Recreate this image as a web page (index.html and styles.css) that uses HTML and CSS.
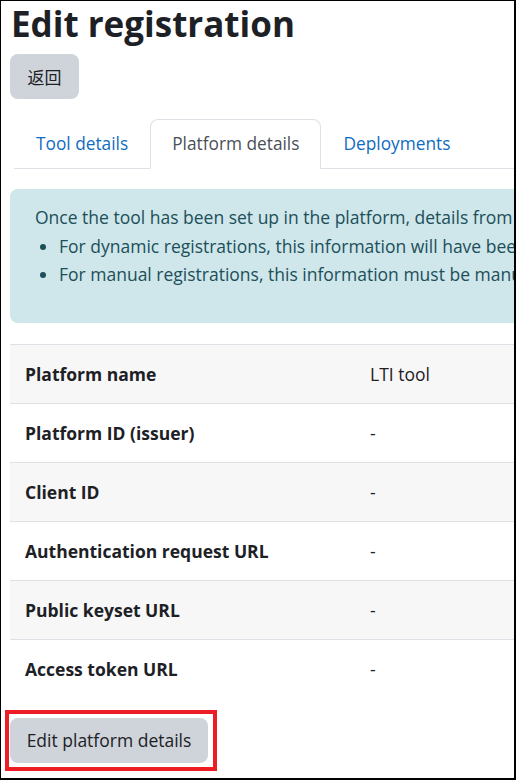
FILE: index.html
```html
<!DOCTYPE html>
<html lang="en">
<head>
<meta charset="utf-8">
<link rel="stylesheet" href="styles.css">
</head>
<body>
<div class="frame">
  <h1 class="title">Edit registration</h1>
  <div class="back-row"><button class="btn">返回</button></div>
  <ul class="tabs">
    <li class="tab"><a class="tab-link">Tool details</a></li>
    <li class="tab active"><a class="tab-link">Platform details</a></li>
    <li class="tab"><a class="tab-link">Deployments</a></li>
  </ul>
  <div class="alert">
    <p class="alert-text">Once the tool has been set up in the platform, details from the platform must be entered here.</p>
    <ul class="alert-list">
      <li>For dynamic registrations, this information will have been set automatically.</li>
      <li>For manual registrations, this information must be manually entered.</li>
    </ul>
  </div>
  <table class="details">
    <tr class="odd"><th>Platform name</th><td>LTI tool</td></tr>
    <tr><th>Platform ID (issuer)</th><td>-</td></tr>
    <tr class="odd"><th>Client ID</th><td>-</td></tr>
    <tr><th>Authentication request URL</th><td>-</td></tr>
    <tr class="odd"><th>Public keyset URL</th><td>-</td></tr>
    <tr><th>Access token URL</th><td>-</td></tr>
  </table>
  <div class="edit-row">
    <div class="highlight"><button class="btn">Edit platform details</button></div>
  </div>
</div>
</body>
</html>
```
FILE: styles.css
```css
html, body {
  margin: 0;
  padding: 0;
  background: #fff;
}
.frame {
  box-sizing: border-box;
  width: 516px;
  height: 780px;
  border-top: 1px solid #000;
  border-left: 1px solid #000;
  border-right: 2px solid #000;
  border-bottom: 2px solid #000;
  overflow: hidden;
  padding: 0 0 0 9px;
  font-family: "Open Sans", "Noto Sans", "Noto Sans CJK SC", sans-serif;
  color: #1d2125;
}
.title {
  margin: 0;
  font-size: 35px;
  line-height: 46px;
  font-weight: 700;
  padding-left: 1px;
  white-space: nowrap;
}
.back-row {
  margin-top: 7px;
}
.btn {
  font-family: "Open Sans", "Noto Sans CJK SC", sans-serif;
  font-size: 17.5px;
  color: #1d2125;
  background: #ced4da;
  border: 0;
  border-radius: 8px;
  height: 45px;
  padding: 0 16px;
  white-space: nowrap;
}
.back-row .btn {
  width: 69px;
  padding: 0;
  font-size: 17px;
}
.tabs {
  list-style: none;
  margin: 20px 0 0 4px;
  padding: 0;
  display: flex;
  border-bottom: 1px solid #dee2e6;
  white-space: nowrap;
}
.tab {
  margin-bottom: -1px;
}
.tab-link {
  display: block;
  height: 48px;
  line-height: 48px;
  padding: 0 21px;
  font-size: 17.3px;
  color: #0f6cbf;
  border: 1px solid transparent;
  border-top-left-radius: 8px;
  border-top-right-radius: 8px;
}
.tab.active .tab-link {
  color: #495057;
  background: #fff;
  border-color: #dee2e6 #dee2e6 #fff;
}
.alert {
  margin-top: 20px;
  width: 560px;
  box-sizing: border-box;
  background: #cfe6ea;
  color: #1c4f59;
  border-radius: 8px;
  padding: 14px 24px 34px 25px;
  font-size: 17.5px;
  line-height: 28.5px;
  white-space: nowrap;
}
.alert-text {
  margin: 0;
}
.alert-list {
  margin: 0;
  padding-left: 24px;
}
.details {
  margin-top: 21px;
  width: 560px;
  border-collapse: collapse;
  font-size: 17.5px;
  white-space: nowrap;
}
.details th, .details td {
  height: 58px;
  border-top: 1px solid #dee2e6;
  text-align: left;
  vertical-align: middle;
  padding: 0 15px;
}
.details th {
  width: 315px;
  font-weight: 700;
}
.details td {
  color: #1d2125;
}
.details tr.odd {
  background: #f7f7f7;
}
.edit-row {
  margin-top: 12px;
  margin-left: -5px;
}
.highlight {
  display: inline-block;
  border: 4px solid #ee1c25;
  padding: 4px 5px 4px 1px;
  line-height: 0;
}
.highlight .btn {
  width: 198px;
  padding: 0;
}
```
